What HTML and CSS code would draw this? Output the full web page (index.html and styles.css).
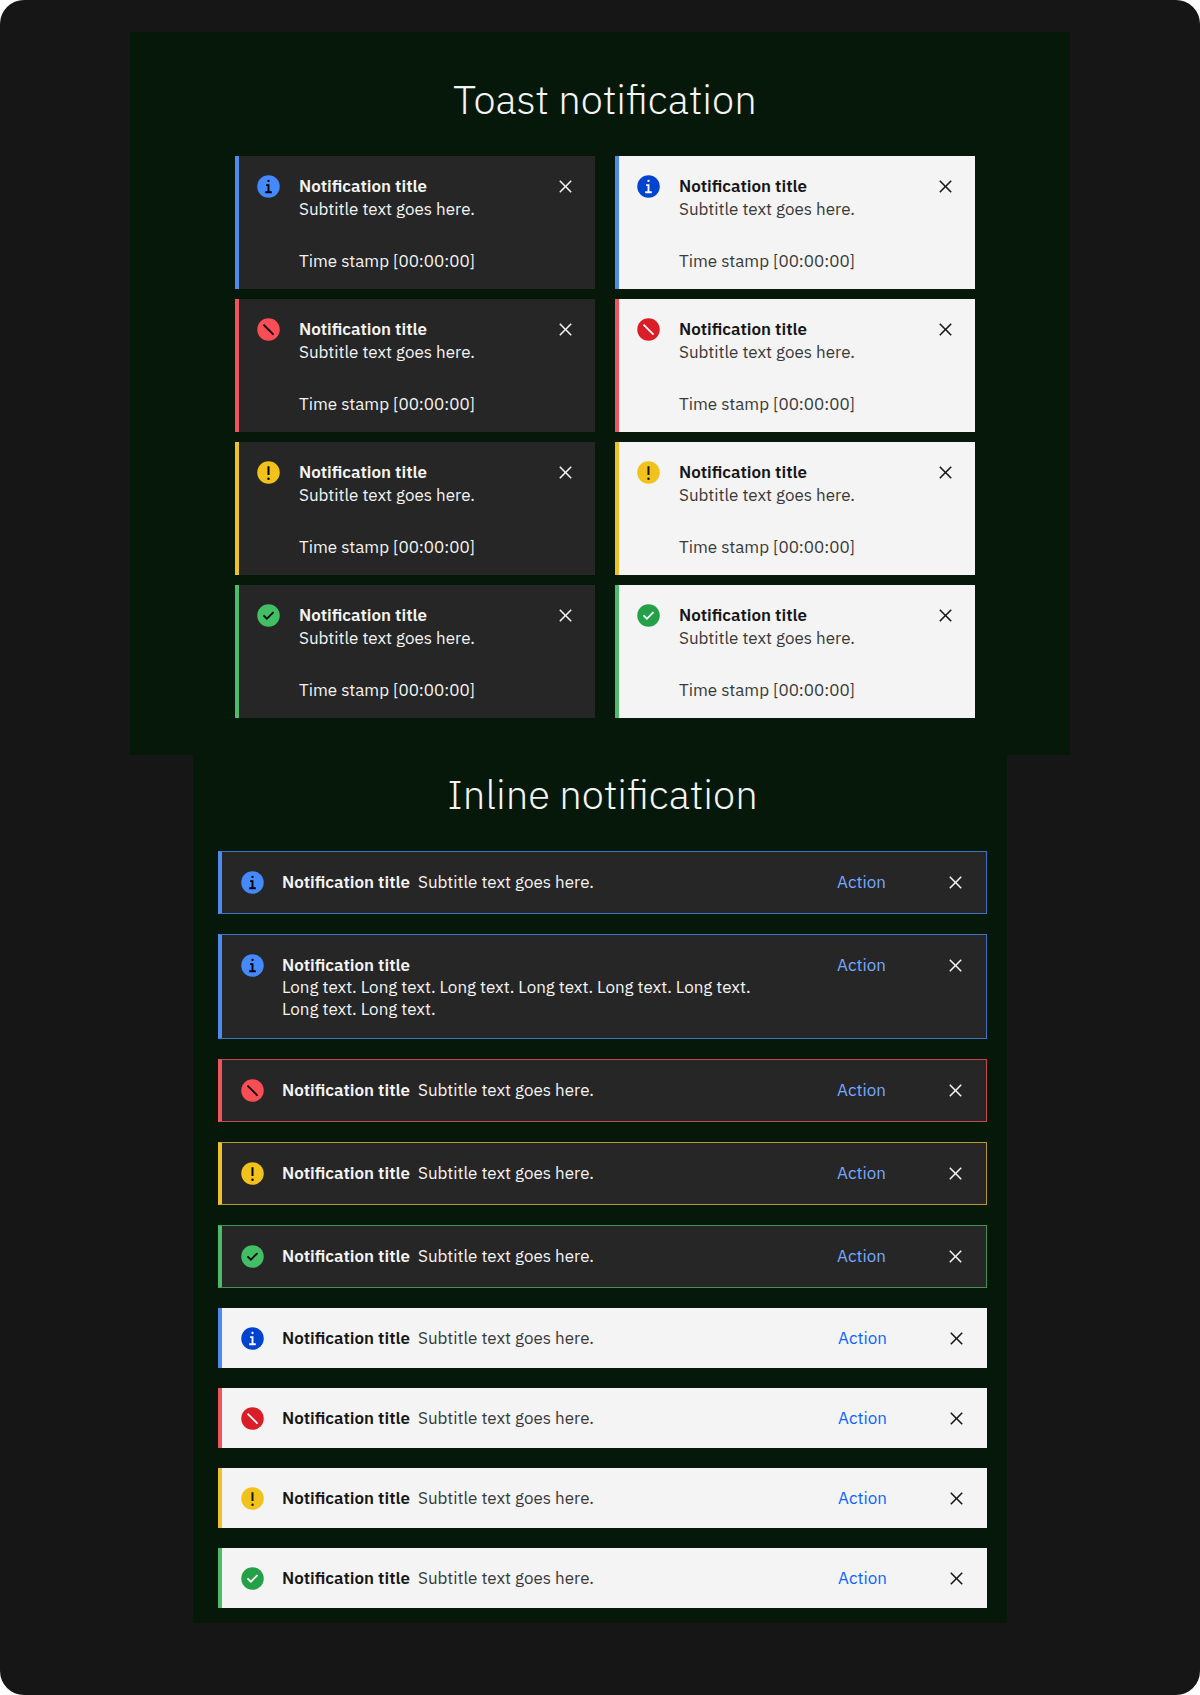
FILE: index.html
```html
<!DOCTYPE html>
<html lang="en">
<head>
<meta charset="utf-8">
<meta name="viewport" content="width=device-width, initial-scale=1">
<title>Notifications</title>
<link rel="stylesheet" href="styles.css">
</head>
<body>
<svg class="sprite" aria-hidden="true">
  <symbol id="info" viewBox="0 0 32 32"><circle cx="16" cy="16" r="14.4" fill="currentColor"/><path class="glyph" d="M16 7.2a1.5 1.5 0 1 1 0 3 1.5 1.5 0 0 1 0-3zM20.2 22.2h-3v-9.2h-4.3v2.3h1.9v6.9h-3v2.3h8.4z"/></symbol>
  <symbol id="error" viewBox="0 0 20 20"><circle cx="10" cy="10" r="9" fill="currentColor"/><path class="glyph" d="M13.5 14.5l-8-8 1-1 8 8z"/></symbol>
  <symbol id="warning" viewBox="0 0 20 20"><circle cx="10" cy="10" r="9" fill="currentColor"/><path class="glyph" d="M9.2 5h1.6v7H9.2zM10 16a1 1 0 1 1 0-2 1 1 0 0 1 0 2z"/></symbol>
  <symbol id="success" viewBox="0 0 20 20"><circle cx="10" cy="10" r="9" fill="currentColor"/><path class="glyph" d="M8.7 13.5l-3.2-3.2 1-1 2.2 2.2 4.8-4.8 1 1z"/></symbol>
  <symbol id="close" viewBox="0 0 32 32"><path fill="currentColor" d="M24 9.4L22.6 8 16 14.6 9.4 8 8 9.4l6.6 6.6L8 22.6 9.4 24l6.6-6.6 6.6 6.6 1.4-1.4-6.6-6.6z"/></symbol>
</svg>
<main class="page">
  <section class="panel panel-toast">
    <h2 class="heading">Toast notification</h2>
    <div class="toasts">
      <article class="note toast dark info"><svg class="icon"><use href="#info"/></svg><div class="body"><h3 class="title">Notification title</h3><p class="subtitle">Subtitle text goes here.</p><p class="time">Time stamp [00:00:00]</p></div><button class="close" type="button" aria-label="Close"><svg class="icon"><use href="#close"/></svg></button></article>
      <article class="note toast light info"><svg class="icon"><use href="#info"/></svg><div class="body"><h3 class="title">Notification title</h3><p class="subtitle">Subtitle text goes here.</p><p class="time">Time stamp [00:00:00]</p></div><button class="close" type="button" aria-label="Close"><svg class="icon"><use href="#close"/></svg></button></article>
      <article class="note toast dark error"><svg class="icon"><use href="#error"/></svg><div class="body"><h3 class="title">Notification title</h3><p class="subtitle">Subtitle text goes here.</p><p class="time">Time stamp [00:00:00]</p></div><button class="close" type="button" aria-label="Close"><svg class="icon"><use href="#close"/></svg></button></article>
      <article class="note toast light error"><svg class="icon"><use href="#error"/></svg><div class="body"><h3 class="title">Notification title</h3><p class="subtitle">Subtitle text goes here.</p><p class="time">Time stamp [00:00:00]</p></div><button class="close" type="button" aria-label="Close"><svg class="icon"><use href="#close"/></svg></button></article>
      <article class="note toast dark warning"><svg class="icon"><use href="#warning"/></svg><div class="body"><h3 class="title">Notification title</h3><p class="subtitle">Subtitle text goes here.</p><p class="time">Time stamp [00:00:00]</p></div><button class="close" type="button" aria-label="Close"><svg class="icon"><use href="#close"/></svg></button></article>
      <article class="note toast light warning"><svg class="icon"><use href="#warning"/></svg><div class="body"><h3 class="title">Notification title</h3><p class="subtitle">Subtitle text goes here.</p><p class="time">Time stamp [00:00:00]</p></div><button class="close" type="button" aria-label="Close"><svg class="icon"><use href="#close"/></svg></button></article>
      <article class="note toast dark success"><svg class="icon"><use href="#success"/></svg><div class="body"><h3 class="title">Notification title</h3><p class="subtitle">Subtitle text goes here.</p><p class="time">Time stamp [00:00:00]</p></div><button class="close" type="button" aria-label="Close"><svg class="icon"><use href="#close"/></svg></button></article>
      <article class="note toast light success"><svg class="icon"><use href="#success"/></svg><div class="body"><h3 class="title">Notification title</h3><p class="subtitle">Subtitle text goes here.</p><p class="time">Time stamp [00:00:00]</p></div><button class="close" type="button" aria-label="Close"><svg class="icon"><use href="#close"/></svg></button></article>
    </div>
  </section>
  <section class="panel panel-inline">
    <h2 class="heading">Inline notification</h2>
    <div class="inlines">
      <article class="note inline dark info"><svg class="icon"><use href="#info"/></svg><div class="body"><h3 class="title">Notification title</h3><p class="subtitle">Subtitle text goes here.</p></div><button class="action" type="button">Action</button><button class="close" type="button" aria-label="Close"><svg class="icon"><use href="#close"/></svg></button></article>
      <article class="note inline multiline dark info"><svg class="icon"><use href="#info"/></svg><div class="body"><h3 class="title">Notification title</h3><p class="subtitle">Long text. Long text. Long text. Long text. Long text. Long text. Long text. Long text.</p></div><button class="action" type="button">Action</button><button class="close" type="button" aria-label="Close"><svg class="icon"><use href="#close"/></svg></button></article>
      <article class="note inline dark error"><svg class="icon"><use href="#error"/></svg><div class="body"><h3 class="title">Notification title</h3><p class="subtitle">Subtitle text goes here.</p></div><button class="action" type="button">Action</button><button class="close" type="button" aria-label="Close"><svg class="icon"><use href="#close"/></svg></button></article>
      <article class="note inline dark warning"><svg class="icon"><use href="#warning"/></svg><div class="body"><h3 class="title">Notification title</h3><p class="subtitle">Subtitle text goes here.</p></div><button class="action" type="button">Action</button><button class="close" type="button" aria-label="Close"><svg class="icon"><use href="#close"/></svg></button></article>
      <article class="note inline dark success"><svg class="icon"><use href="#success"/></svg><div class="body"><h3 class="title">Notification title</h3><p class="subtitle">Subtitle text goes here.</p></div><button class="action" type="button">Action</button><button class="close" type="button" aria-label="Close"><svg class="icon"><use href="#close"/></svg></button></article>
      <article class="note inline light info"><svg class="icon"><use href="#info"/></svg><div class="body"><h3 class="title">Notification title</h3><p class="subtitle">Subtitle text goes here.</p></div><button class="action" type="button">Action</button><button class="close" type="button" aria-label="Close"><svg class="icon"><use href="#close"/></svg></button></article>
      <article class="note inline light error"><svg class="icon"><use href="#error"/></svg><div class="body"><h3 class="title">Notification title</h3><p class="subtitle">Subtitle text goes here.</p></div><button class="action" type="button">Action</button><button class="close" type="button" aria-label="Close"><svg class="icon"><use href="#close"/></svg></button></article>
      <article class="note inline light warning"><svg class="icon"><use href="#warning"/></svg><div class="body"><h3 class="title">Notification title</h3><p class="subtitle">Subtitle text goes here.</p></div><button class="action" type="button">Action</button><button class="close" type="button" aria-label="Close"><svg class="icon"><use href="#close"/></svg></button></article>
      <article class="note inline light success"><svg class="icon"><use href="#success"/></svg><div class="body"><h3 class="title">Notification title</h3><p class="subtitle">Subtitle text goes here.</p></div><button class="action" type="button">Action</button><button class="close" type="button" aria-label="Close"><svg class="icon"><use href="#close"/></svg></button></article>
    </div>
  </section>
</main>
</body>
</html>
```

FILE: styles.css
```css
* { box-sizing: border-box; }

body {
  margin: 0;
  background: #fff;
  font-family: "IBM Plex Sans", Roboto, "Liberation Sans", sans-serif;
  font-size: 17px;
}

h2, h3, p { margin: 0; }

button {
  padding: 0;
  border: 0;
  background: none;
  color: inherit;
  font: inherit;
  cursor: pointer;
}

.sprite { display: none; }

.page {
  min-height: 100vh;
  padding: 32px 0 72px;
  display: flex;
  flex-direction: column;
  align-items: center;
  background: #161616;
  border-radius: 24px;
}

.panel {
  width: 100%;
  background: #06180a;
}

.panel-toast {
  max-width: 940px;
  padding: 42px 95px 37px 105px;
}

.panel-inline {
  max-width: 814px;
  padding: 14px 20px 15px 25px;
}

.heading {
  margin-bottom: 32px;
  color: #f4f4f4;
  font-size: 40px;
  font-weight: 300;
  line-height: 50px;
  text-align: center;
}

.toasts {
  display: grid;
  grid-template-columns: 1fr 1fr;
  gap: 10px 20px;
}

.inlines {
  display: flex;
  flex-direction: column;
  gap: 20px;
}

.note {
  display: flex;
  align-items: flex-start;
}

.icon {
  display: block;
  flex: none;
  width: 25px;
  height: 25px;
}

.note > .icon { color: var(--icon); }

.glyph { fill: var(--glyph); }

.body {
  flex: 1;
  padding-top: 1px;
}

.title {
  font-size: 17px;
  font-weight: 600;
}

.close { flex: none; }

/* Themes */
.dark {
  --glyph: #000;
  background: #262626;
  color: #f4f4f4;
}

.light {
  --glyph: #fff;
  background: #f4f4f4;
  color: #161616;
}

.light .subtitle,
.light .time { color: #393939; }

/* Statuses */
.info { --accent: #4f8bee; --edge: #3f73c4; --icon: #4589ff; }
.error { --accent: #ee5560; --edge: #c4484f; --icon: #fa4d56; }
.warning { --accent: #ecc12c; --edge: #b8982c; --icon: #f1c21b; }
.success { --accent: #4dba6c; --edge: #3f9157; --icon: #42be65; }

.light.info { --icon: #0043ce; }
.light.error { --icon: #da1e28; }
.light.success { --icon: #24a148; }
.light.warning { --glyph: #161616; }

/* Toast */
.toast {
  gap: 18px;
  padding: 18px 17px 16px;
  border-left: 4px solid var(--accent);
  line-height: 23px;
}

.time { margin-top: 29px; }

/* Inline */
.inline {
  padding: 18px 18px 17px;
  border-left: 4px solid var(--accent);
  line-height: 22px;
}

.inline.dark {
  padding-bottom: 18px;
  border-top: 1px solid var(--edge);
  border-right: 1px solid var(--edge);
  border-bottom: 1px solid var(--edge);
}

.inline .body {
  display: flex;
  gap: 8px;
  margin-left: 17px;
}

.multiline .body {
  flex-direction: column;
  gap: 0;
  padding-right: 50px;
}

.action {
  flex: none;
  width: 106px;
  padding-top: 1px;
  text-align: left;
}

.dark .action { color: #78a9ff; }
.light .action { color: #0f62fe; }
```
